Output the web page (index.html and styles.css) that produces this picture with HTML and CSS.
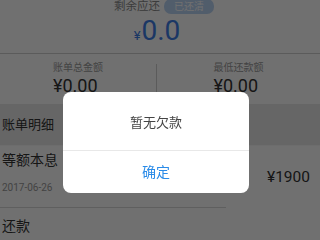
FILE: index.html
```html
<!DOCTYPE html>
<html>
<head>
<meta charset="utf-8">
<link rel="stylesheet" href="styles.css">
</head>
<body>
<div class="page">
  <section class="summary">
    <div class="remain-row">
      <span class="remain-label">剩余应还</span>
      <span class="badge">已还清</span>
    </div>
    <div class="remain-amount"><span class="yen">¥</span>0.0</div>
  </section>
  <section class="totals">
    <div class="total-col total-left">
      <div class="total-inner">
        <div class="total-label">账单总金额</div>
        <div class="total-value">¥0.00</div>
      </div>
    </div>
    <div class="total-divider"></div>
    <div class="total-col total-right">
      <div class="total-inner">
        <div class="total-label">最低还款额</div>
        <div class="total-value">¥0.00</div>
      </div>
    </div>
  </section>
  <div class="section-head">账单明细</div>
  <div class="item">
    <div class="item-left">
      <div class="item-title">等额本息</div>
      <div class="item-date">2017-06-26</div>
    </div>
    <div class="item-amount">¥1900</div>
  </div>
  <div class="sep"></div>
  <div class="item item-last">
    <div class="item-left">
      <div class="item-title">还款</div>
    </div>
  </div>
</div>
<div class="mask"></div>
<div class="dialog">
  <div class="dialog-body">暂无欠款</div>
  <div class="dialog-btn">确定</div>
</div>
</body>
</html>
```

FILE: styles.css
```css
* { box-sizing: border-box; }
html, body { margin: 0; padding: 0; }
body {
  width: 320px;
  height: 240px;
  overflow: hidden;
  background: #fff;
  font-family: Roboto, "Noto Sans CJK SC", sans-serif;
  color: #333;
}
.page { width: 320px; height: 240px; overflow: hidden; }
.summary {
  height: 54px;
  border-bottom: 1px solid #cfcfcf;
  display: flex;
  flex-direction: column;
  align-items: center;
}
.remain-row {
  display: flex;
  align-items: center;
  gap: 4px;
  margin-top: -2px;
  height: 16px;
  padding-left: 8px;
}
.remain-label {
  font-size: 11.5px;
  color: #888;
  line-height: 16px;
}
.badge {
  font-size: 10px;
  line-height: 15px;
  height: 15px;
  padding: 0 10px;
  border-radius: 7px;
  background: #b9d3f3;
  color: #fff;
}
.remain-amount {
  font-size: 28px;
  line-height: 28px;
  color: #3f7ee6;
  margin-top: 3px;
  margin-left: -6px;
}
.yen { font-size: 13px; margin-right: 1px; }
.totals {
  display: flex;
  height: 50px;
  align-items: stretch;
}
.total-col {
  display: flex;
  justify-content: center;
  padding-top: 8px;
}
.total-left { width: 156px; }
.total-right { flex: 1; }
.total-divider {
  width: 1px;
  background: #cfcfcf;
  margin-top: 10px;
  margin-bottom: -10px;
}
.total-label {
  font-size: 10px;
  line-height: 12px;
  color: #999;
}
.total-value {
  font-size: 18px;
  line-height: 20px;
  color: #333;
  margin-top: 2px;
}
.section-head {
  height: 42px;
  background: #e8e8e8;
  font-size: 13px;
  line-height: 41px;
  padding-left: 2px;
  color: #333;
  border-bottom: 1px solid #f7f7f7;
}
.item {
  display: flex;
  align-items: center;
  justify-content: space-between;
  padding: 0 10px 0 2px;
  height: 61px;
}
.item-left { align-self: flex-start; padding-top: 5px; }
.item-title {
  font-size: 14px;
  line-height: 18px;
  color: #333;
}
.item-date {
  font-size: 10px;
  line-height: 14px;
  color: #999;
  margin-top: 12px;
}
.item-amount {
  font-size: 15.5px;
  color: #333;
}
.sep {
  height: 1px;
  background: #d9d9d9;
  margin-right: 94px;
}
.item-last .item-left { padding-top: 9px; }
.mask {
  position: fixed;
  inset: 0;
  background: rgba(0, 0, 0, 0.56);
}
.dialog {
  position: absolute;
  left: 63px;
  top: 92px;
  width: 186px;
  height: 101px;
  background: #fff;
  border-radius: 8px;
  display: flex;
  flex-direction: column;
  overflow: hidden;
}
.dialog-body {
  height: 59px;
  display: flex;
  align-items: center;
  justify-content: center;
  font-size: 13px;
  color: #444;
  border-bottom: 1px solid #e8e8e8;
}
.dialog-btn {
  flex: 1;
  display: flex;
  align-items: center;
  justify-content: center;
  font-size: 14px;
  color: #2a8be8;
  padding-bottom: 2px;
}
```
